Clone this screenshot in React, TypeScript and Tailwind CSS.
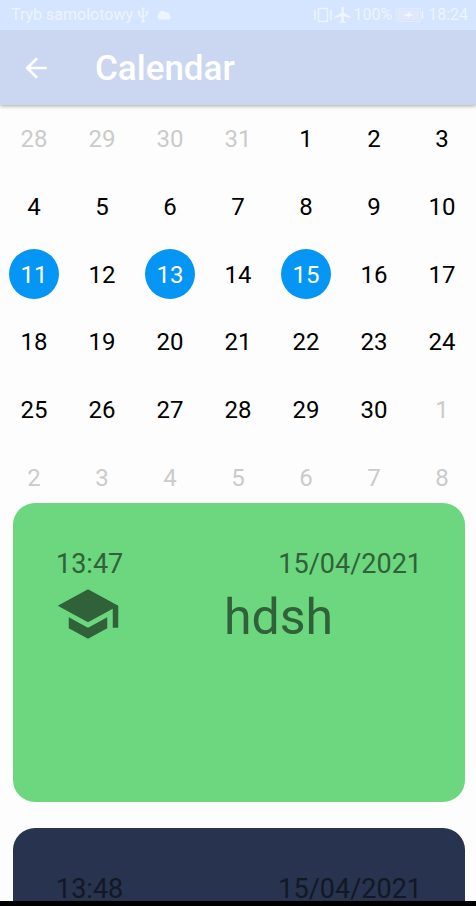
import React from 'react';
import { MdArrowBack, MdSchool, MdFlight } from 'react-icons/md';

type Day = { day: number; outside?: boolean; marked?: boolean };
type Entry = { time: string; date: string; title: string; style: string };

const days: Day[] = [
  ...[28, 29, 30, 31].map((day) => ({ day, outside: true })),
  ...Array.from({ length: 30 }, (_, i) => ({
    day: i + 1,
    marked: [11, 13, 15].includes(i + 1),
  })),
  ...[1, 2, 3, 4, 5, 6, 7, 8].map((day) => ({ day, outside: true })),
];

const entries: Entry[] = [
  { time: '13:47', date: '15/04/2021', title: 'hdsh', style: 'bg-[#6cd77e] text-[#306139]' },
  { time: '13:48', date: '15/04/2021', title: '', style: 'bg-[#27334f] text-[#121824]' },
];

function UsbIcon() {
  return (
    <svg viewBox="0 0 12 16" className="h-4 w-3" fill="none" stroke="currentColor" strokeWidth="1.4">
      <path d="M6 2v12M2 5v3l4 3M10 5v2.500L6 10" />
      <path d="M6 0L4 3h4z" fill="currentColor" stroke="none" />
      <circle cx="6" cy="14" r="1.700" fill="currentColor" stroke="none" />
      <circle cx="2" cy="5" r="1.400" fill="currentColor" stroke="none" />
      <path d="M8.700 4h2.600v2.500H8.700z" fill="currentColor" stroke="none" />
    </svg>
  );
}

function CloudIcon() {
  return (
    <svg viewBox="0 0 14 10" className="h-[10px] w-[14px]" fill="currentColor">
      <path d="M3 9.500A2.700 2.700 0 0 1 1.500 4.600 4 4 0 0 1 8.600 2.200 3.500 3.500 0 0 1 13 5.500a2.500 2.500 0 0 1-1.500 4z" />
    </svg>
  );
}

function VibrateIcon() {
  return (
    <svg viewBox="0 0 20 16" className="h-4 w-5" fill="none" stroke="currentColor" strokeWidth="1.500">
      <rect x="5.500" y="1.500" width="9" height="13" rx="1" />
      <path d="M2.500 3l-1 1.700 1 1.600-1 1.700 1 1.600-1 1.700 1 1.700M17.500 3l1 1.700-1 1.600 1 1.700-1 1.600 1 1.700-1 1.700" />
    </svg>
  );
}

function BatteryIcon() {
  return (
    <svg viewBox="0 0 28 14" className="h-[14px] w-7" fill="none">
      <rect x="0.500" y="0.500" width="24" height="13" rx="2" stroke="#e3ecfb" />
      <rect x="2" y="2" width="21" height="10" fill="#dfe9fb" />
      <path d="M7 7l4.500-1 1-2 1.500 2 4 1-4.500 1-1 2-1.500-2z" fill="#f4f9ff" />
      <path d="M26.500 3.500v7" stroke="#ecf4ff" strokeWidth="1.500" />
    </svg>
  );
}

function StatusBar() {
  return (
    <div className="z-20 flex h-[30px] shrink-0 items-center justify-between bg-[#d5e5ff] pr-2 pl-[11px] text-base text-[#ecf4ff]">
      <div className="flex items-center">
        <span>Tryb samolotowy</span>
        <span className="ml-1 flex items-center gap-2">
          <UsbIcon />
          <CloudIcon />
        </span>
      </div>
      <div className="flex items-center">
        <VibrateIcon />
        <MdFlight className="size-5" />
        <span>100%</span>
        <span className="mx-1">
          <BatteryIcon />
        </span>
        <span>18:24</span>
      </div>
    </div>
  );
}

function DayCell({ day, outside, marked }: Day) {
  const tone = marked ? 'bg-[#0495f5] text-white' : outside ? 'text-[#cbcbcb]' : 'text-black';
  return (
    <button type="button" className={`flex size-[50px] items-center justify-center rounded-full pt-px text-2xl ${tone}`}>
      {day}
    </button>
  );
}

function EntryCard({ time, date, title, style }: Entry) {
  return (
    <article className={`h-[299px] shrink-0 rounded-[22px] px-[43px] pt-[49px] ${style}`}>
      <div className="flex justify-between text-[27px] leading-6">
        <time>{time}</time>
        <time>{date}</time>
      </div>
      <div className="mt-[5px] flex items-start">
        <MdSchool className="-ml-px size-[66px] shrink-0" />
        {title && <h2 className="flex-1 pt-1 pr-9 pl-[50px] text-center text-[50px] leading-[64px]">{title}</h2>}
      </div>
    </article>
  );
}

export default function App() {
  return (
    <div className="flex h-screen flex-col overflow-hidden bg-[#fdfdfd] font-[Roboto,sans-serif]">
      <StatusBar />
      <header className="z-10 flex h-[75px] shrink-0 items-center bg-[#cbd6f1] px-5 text-white shadow-[0_1px_4px_rgba(0,0,0,0.35)]">
        <button type="button" aria-label="Back">
          <MdArrowBack className="size-8" />
        </button>
        <h1 className="ml-[43px] pt-1 text-[35px] font-medium">Calendar</h1>
      </header>
      <main className="flex min-h-0 flex-1 flex-col overflow-hidden">
        <section className="h-[398px] shrink-0 overflow-hidden" aria-label="Calendar">
          <div className="grid h-[406px] grid-cols-7 grid-rows-6 place-items-center">
            {days.map((d, i) => (
              <DayCell key={i} {...d} />
            ))}
          </div>
        </section>
        <section className="flex flex-col gap-[26px] pr-[11px] pl-[13px]" aria-label="Entries">
          {entries.map((entry) => (
            <EntryCard key={entry.time} {...entry} />
          ))}
        </section>
      </main>
      <div className="h-[5px] shrink-0 bg-black" />
    </div>
  );
}
